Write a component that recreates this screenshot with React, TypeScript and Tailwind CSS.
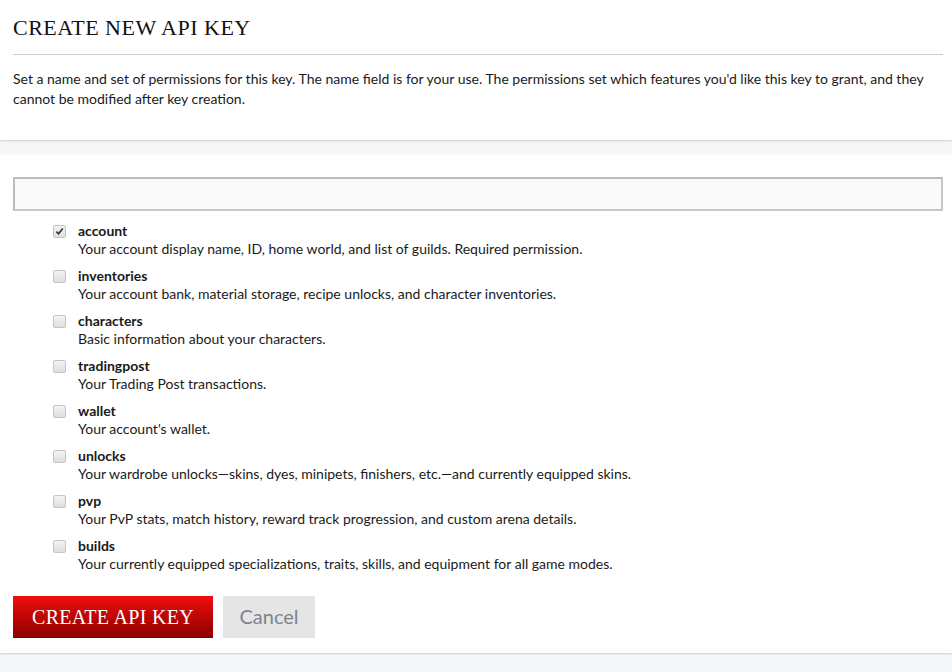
const perms = [
  { name: "account", desc: "Your account display name, ID, home world, and list of guilds. Required permission.", checked: true },
  { name: "inventories", desc: "Your account bank, material storage, recipe unlocks, and character inventories." },
  { name: "characters", desc: "Basic information about your characters." },
  { name: "tradingpost", desc: "Your Trading Post transactions." },
  { name: "wallet", desc: "Your account's wallet." },
  { name: "unlocks", desc: "Your wardrobe unlocks\u2014skins, dyes, minipets, finishers, etc.\u2014and currently equipped skins." },
  { name: "pvp", desc: "Your PvP stats, match history, reward track progression, and custom arena details." },
  { name: "builds", desc: "Your currently equipped specializations, traits, skills, and equipment for all game modes." },
];

function Checkbox({ checked }: { checked?: boolean }) {
  return (
    <span className="mt-[3px] flex h-[13px] w-[13px] shrink-0 items-center justify-center rounded-[2px] border border-[#c4c4c4] bg-gradient-to-b from-[#f4f4f4] to-[#dedede]">
      {checked && (
        <svg viewBox="0 0 10 10" className="h-[9px] w-[9px]">
          <path d="M1.5 5.2 L4 7.6 L8.6 1.8" fill="none" stroke="#333" strokeWidth="1.8" />
        </svg>
      )}
    </span>
  );
}

export default function App() {
  return (
    <div className="min-h-[672px] bg-[#f6f7f9] font-['Lato','Open_Sans',sans-serif] text-[14px] text-[#1a1a1a]">
      <section className="bg-white pb-[31px] pl-[13px] pr-[9px] pt-[13px] shadow-[0_1px_2px_rgba(0,0,0,0.18)]">
        <h1 className="border-b border-[#cccccc] pb-[11px] font-['Liberation_Serif',serif] text-[22px] uppercase leading-[30px] tracking-[0.5px] text-[#111]">
          Create New API Key
        </h1>
        <p className="mt-[14px] leading-[20px]">
          Set a name and set of permissions for this key. The name field is for your use. The permissions set which features you'd like this key to grant, and they cannot be modified after key creation.
        </p>
      </section>

      <section className="mt-[14px] bg-white pb-[15px] pl-[13px] pr-[9px] pt-[23px] shadow-[0_1px_2px_rgba(0,0,0,0.18)]">
        <input
          type="text"
          className="block h-[34px] w-full border-2 border-[#bcbcbc] border-b-[#c8c8c8] border-r-[#c8c8c8] bg-[#fafafa] px-2 outline-none"
        />
        <ul className="mt-[11px] flex flex-col gap-[10px] pl-[40px]">
          {perms.map((p) => (
            <li key={p.name} className="flex gap-[12px]">
              <Checkbox checked={p.checked} />
              <div className="leading-[17.5px]">
                <div className="font-bold">{p.name}</div>
                <div>{p.desc}</div>
              </div>
            </li>
          ))}
        </ul>
        <div className="mt-[24px] flex gap-[10px]">
          <button className="h-[42px] w-[200px] bg-gradient-to-b from-[#f0100e] to-[#8c0000] font-['Liberation_Serif',serif] text-[20px] uppercase tracking-[0.3px] text-white">
            Create API Key
          </button>
          <button className="h-[42px] w-[92px] bg-[#e5e5e5] pb-[3px] text-[20px] text-[#7c8490]">
            Cancel
          </button>
        </div>
      </section>
    </div>
  );
}
